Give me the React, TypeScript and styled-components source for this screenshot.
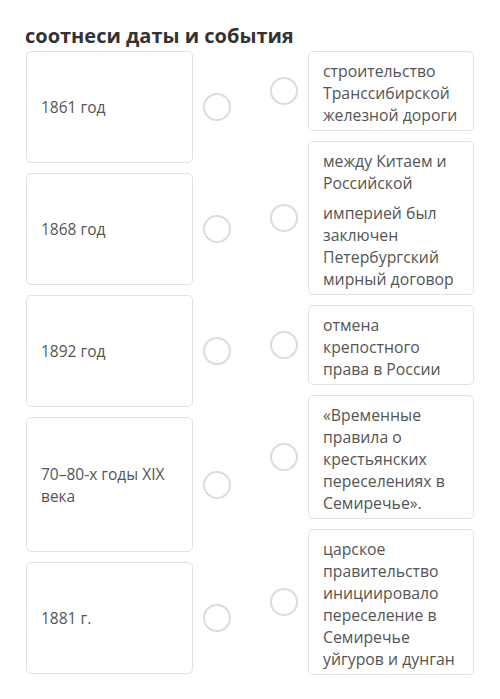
import React from 'react';
import styled, {createGlobalStyle} from 'styled-components';

const GlobalStyle = createGlobalStyle`
  html, body {
    margin: 0;
    padding: 0;
    background: #ffffff;
  }
  body {
    font-family: "Open Sans", "Noto Sans", "Liberation Sans", sans-serif;
    color: #555;
  }
`;

const Page = styled.div`
  width: 500px;
  min-height: 699px;
  padding: 24px 0 0 25px;
  box-sizing: border-box;
  background: #fff;
`;

const Title = styled.h2`
  margin: 0 0 3px 0;
  font-size: 20px;
  line-height: 24px;
  font-weight: 700;
  color: #333;
`;

const Board = styled.div`
  display: flex;
  align-items: flex-start;
  gap: 39px;
  padding-left: 1px;
`;

const Column = styled.div`
  display: flex;
  flex-direction: column;
  gap: 10px;
`;

const Row = styled.div`
  display: flex;
  align-items: center;
  gap: 10px;
`;

const Card = styled.div`
  box-sizing: border-box;
  background: #fff;
  border: 1px solid #e2e2e2;
  border-radius: 5px;
  line-height: 22px;
  color: #555;
`;

const DateCard = styled(Card)<{ $h: number }>`
  width: 167px;
  height: ${p => p.$h}px;
  padding: 0 14px;
  display: flex;
  align-items: center;
  font-size: 15.5px;
`;

const EventCard = styled(Card)`
  width: 166px;
  padding: 8px 10px 4px 14px;
  font-size: 15.8px;

  p {
    margin: 0;
  }
  p + p {
    margin-top: 8px;
  }
`;

const Dot = styled.span`
  flex: none;
  width: 28px;
  height: 28px;
  box-sizing: border-box;
  border: 2.5px solid #dcdcdc;
  border-radius: 50%;
  background: #fff;
`;

const dates: { text: string; h: number }[] = [
    {text: '1861 год', h: 112},
    {text: '1868 год', h: 112},
    {text: '1892 год', h: 112},
    {text: '70–80-х годы XIX века', h: 135},
    {text: '1881 г.', h: 112},
];

const events: string[][] = [
    ['строительство Транссибирской железной дороги'],
    ['между Китаем и Российской', 'империей был заключен Петербургский мирный договор'],
    ['отмена крепостного права в России'],
    ['«Временные правила о крестьянских переселениях в Семиречье».'],
    ['царское правительство инициировало переселение в Семиречье уйгуров и дунган'],
];

export default function App() {
    return (
        <>
            <GlobalStyle/>
            <Page>
                <Title>соотнеси даты и события</Title>
                <Board>
                    <Column>
                        {dates.map(d => (
                            <Row key={d.text}>
                                <DateCard $h={d.h}>{d.text}</DateCard>
                                <Dot/>
                            </Row>
                        ))}
                    </Column>
                    <Column>
                        {events.map((parts, i) => (
                            <Row key={i}>
                                <Dot/>
                                <EventCard>
                                    {parts.map(t => <p key={t}>{t}</p>)}
                                </EventCard>
                            </Row>
                        ))}
                    </Column>
                </Board>
            </Page>
        </>
    );
}
